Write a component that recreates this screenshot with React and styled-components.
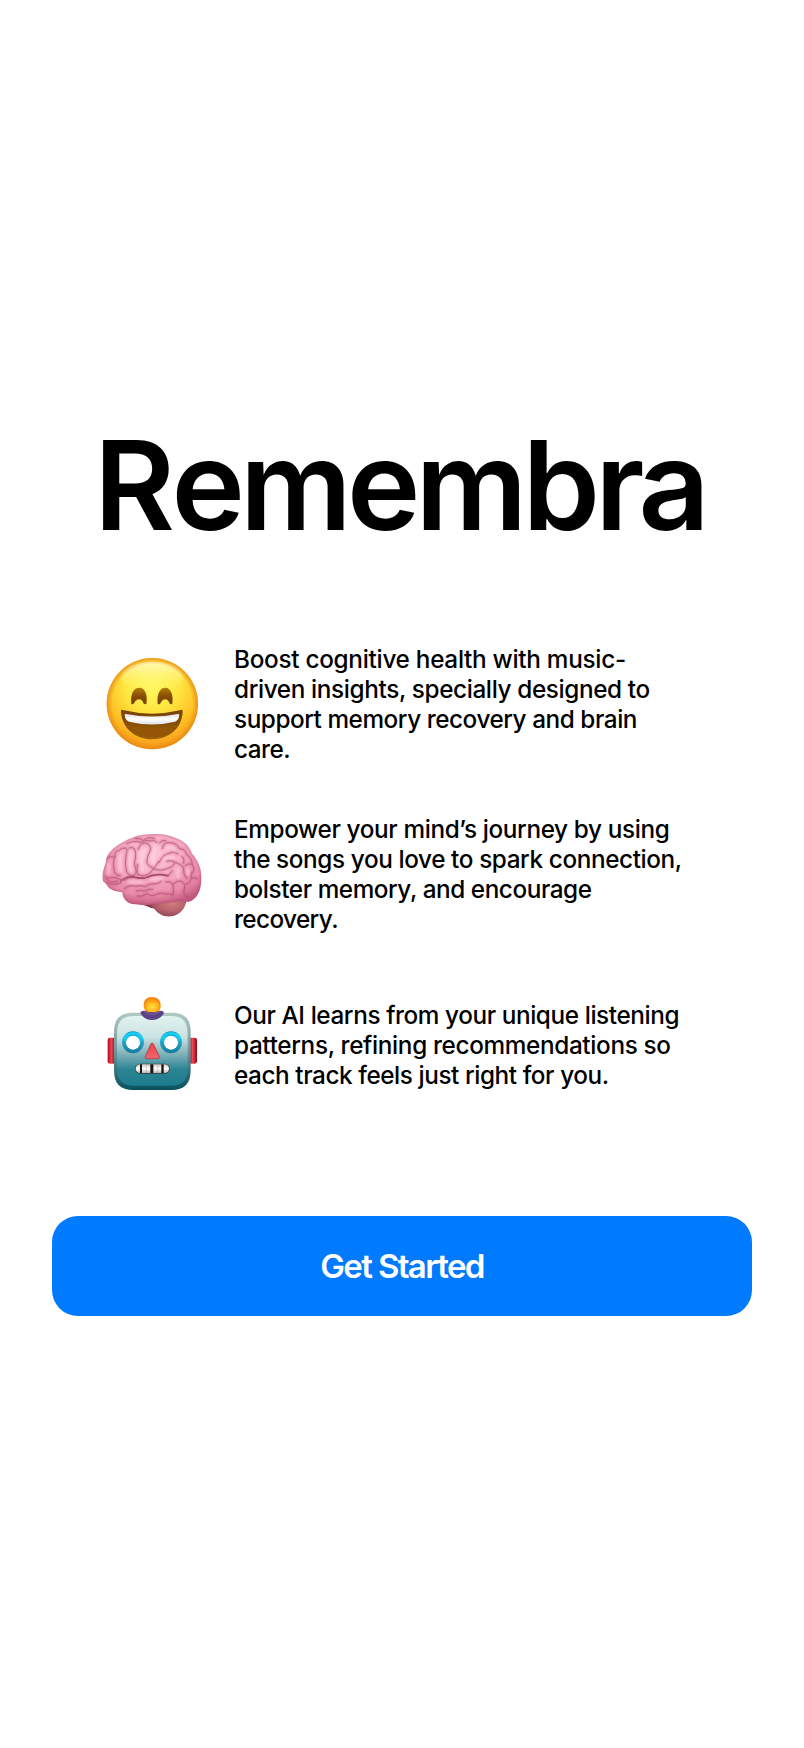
import React from "react";
import styled, { createGlobalStyle } from "styled-components";

const GlobalStyle = createGlobalStyle`
  * { box-sizing: border-box; }
  body { margin: 0; background: #fff; }
`;

const Screen = styled.main`
  min-height: 1748px;
  padding: 410px 52px 0;
  display: flex;
  flex-direction: column;
  background: #fff;
  color: #000;
  font-family: Inter, "Liberation Sans", sans-serif;
`;

const Title = styled.h1`
  margin: 0 0 82px;
  padding-left: 42px;
  font-size: 124.2px;
  line-height: 150px;
  font-weight: 590;
  letter-spacing: -4.85px;
  white-space: nowrap;
`;

const Initial = styled.span`
  letter-spacing: -3.6px;
`;

const FeatureList = styled.ul`
  list-style: none;
  margin: 0 0 110px;
  padding: 0 0 0 38px;
  display: flex;
  flex-direction: column;
  gap: 46px;
`;

const FeatureRow = styled.li`
  display: flex;
  align-items: center;
  gap: 20px;
  height: 124px;
`;

const Emoji = styled.svg`
  flex: none;
  width: 124px;
  height: 124px;
`;

const FeatureText = styled.p`
  margin: 0;
  padding-top: ${(p) => p.$drop || 0}px;
  font-size: 24.3px;
  line-height: 30px;
  font-weight: 450;
`;

const Line = styled.span`
  display: block;
  white-space: nowrap;
  letter-spacing: ${(p) => p.$tracking}px;
`;

const PrimaryButton = styled.button`
  height: 100px;
  padding: 0;
  border: 0;
  border-radius: 26px;
  background: #007aff;
  color: #fff;
  font-family: inherit;
  font-size: 33px;
  font-weight: 580;
  letter-spacing: -1.65px;
`;

function SmileEmoji() {
  return (
    <Emoji viewBox="0 6 372 372" aria-label="Grinning face">
      <defs>
        <radialGradient id="face" cx="0.5" cy="0.28" r="0.74">
          <stop offset="0" stopColor="#fffb62" />
          <stop offset="0.4" stopColor="#ffe640" />
          <stop offset="0.7" stopColor="#fdc326" />
          <stop offset="0.9" stopColor="#f9a01c" />
          <stop offset="1" stopColor="#ef8814" />
        </radialGradient>
        <radialGradient id="rim" cx="0.5" cy="0.5" r="0.5">
          <stop offset="0.87" stopColor="#ee9312" stopOpacity="0" />
          <stop offset="1" stopColor="#e98a16" stopOpacity="0.85" />
        </radialGradient>
        <linearGradient id="shine" x1="0" y1="0" x2="0" y2="1">
          <stop offset="0" stopColor="#fffbd0" stopOpacity="0.85" />
          <stop offset="1" stopColor="#fff45c" stopOpacity="0" />
        </linearGradient>
        <linearGradient id="eye" x1="0" y1="0" x2="0" y2="1">
          <stop offset="0" stopColor="#b47c08" />
          <stop offset="0.5" stopColor="#8a4e05" />
          <stop offset="1" stopColor="#754005" />
        </linearGradient>
        <linearGradient id="mouth" x1="0" y1="0" x2="0" y2="1">
          <stop offset="0" stopColor="#764105" />
          <stop offset="1" stopColor="#9a6008" />
        </linearGradient>
        <linearGradient id="smileTeeth" x1="0" y1="0" x2="0" y2="1">
          <stop offset="0" stopColor="#d9d9e2" />
          <stop offset="0.5" stopColor="#fff" />
          <stop offset="1" stopColor="#dcdde8" />
        </linearGradient>
      </defs>
      <circle cx="187" cy="191" r="137" fill="url(#face)" />
      <ellipse cx="187" cy="112" rx="92" ry="47" fill="url(#shine)" />
      <circle cx="187" cy="191" r="137" fill="url(#rim)" />
      <path d="M124 191C121 161 131 143 148 143S174 164 169 191C166 194 162 192 160 189C156 174 139 174 133 189C130 194 126 194 124 191Z" fill="url(#eye)" />
      <path d="M203 191C200 161 210 143 226 143S251 164 247 191C244 194 240 192 238 189C234 174 218 174 212 189C209 194 205 194 203 191Z" fill="url(#eye)" />
      <path d="M93 213C93 208 96 209 101 211Q186 231 270 211C276 208 278 209 278 214C277 264 238 298 186 298S94 262 93 213Z" fill="url(#mouth)" />
      <path d="M104 221Q186 238 268 221Q268 239 255 245Q185 262 117 245Q104 239 104 221Z" fill="url(#smileTeeth)" />
      <path d="M110 254Q186 270 262 254C248 279 219 291 186 291S125 281 110 254Z" fill="#925606" />
    </Emoji>
  );
}

const brainOutline =
  "M38 185C37 164 47 151 49 131C57 106 83 89 109 76C130 66 149 58 179 58C211 55 235 59 257 69C288 80 299 97 307 117C325 137 335 164 334 190C334 219 326 244 307 256C296 263 284 260 276 258L172 270C155 272 146 267 135 268C113 268 98 252 97 232C84 230 73 229 62 222C51 216 51 206 42 201C38 198 38 192 38 185Z";

const brainFolds = [
  "M49 132Q60 121 73 126Q68 147 73 170Q78 183 91 181",
  "M76 127Q70 109 86 107Q96 97 106 99",
  "M105 99Q115 100 109 117Q103 145 110 171Q119 185 133 181",
  "M131 181Q142 178 137 161Q130 144 136 132Q139 116 134 102Q127 94 117 99",
  "M143 148Q138 164 143 178Q154 186 171 180Q184 174 191 161",
  "M191 161Q178 156 170 143Q171 121 182 104Q182 85 163 84Q149 86 145 103",
  "M110 87Q128 75 153 82Q166 74 183 78Q195 73 201 82",
  "M136 70Q152 70 160 76Q176 64 193 70",
  "M191 161Q213 171 232 160Q248 158 254 144",
  "M206 139Q198 152 191 160",
  "M207 143Q218 118 238 115Q249 107 264 117",
  "M217 101Q220 79 240 83Q259 83 269 102Q284 100 289 116",
  "M208 84Q215 74 227 76",
  "M230 139Q243 133 256 142Q272 147 281 158Q278 176 290 191",
  "M280 145Q286 131 275 124",
  "M289 118Q306 128 307 149Q316 159 309 173",
  "M304 147Q292 145 286 151",
  "M247 167Q241 178 232 183Q214 176 198 179Q180 181 164 190Q145 190 131 187Q113 186 103 196",
  "M44 183Q52 194 64 187Q81 187 93 194",
  "M51 202Q69 214 93 203",
  "M48 190Q60 207 82 198",
  "M103 222Q117 207 137 214Q153 208 164 215Q178 205 192 207Q208 206 214 198",
  "M141 243Q158 247 172 236Q185 247 199 238Q214 231 224 237Q236 234 248 240",
  "M139 228Q153 224 165 228Q176 220 188 223",
  "M249 240Q253 221 248 207Q242 197 227 201",
  "M250 207Q265 193 277 200Q289 211 281 228Q283 243 297 250",
  "M289 208Q301 205 304 190Q312 185 322 191",
  "M305 190Q301 178 305 171",
];

function BrainEmoji() {
  return (
    <Emoji viewBox="0 -9 372 372" aria-label="Brain">
      <defs>
        <radialGradient id="brainFill" cx="0.48" cy="0.3" r="0.7">
          <stop offset="0" stopColor="#ffc9dc" />
          <stop offset="0.48" stopColor="#f8adc5" />
          <stop offset="0.8" stopColor="#ea8aa9" />
          <stop offset="1" stopColor="#c45f81" />
        </radialGradient>
        <radialGradient id="stemFill" cx="0.6" cy="0.35" r="0.7">
          <stop offset="0" stopColor="#cf7d7e" />
          <stop offset="0.6" stopColor="#b45f69" />
          <stop offset="1" stopColor="#86404f" />
        </radialGradient>
        <clipPath id="brainClip"><path d={brainOutline} /></clipPath>
        <filter id="foldSoft"><feGaussianBlur stdDeviation="3" /></filter>
        <filter id="lineSoft"><feGaussianBlur stdDeviation="1" /></filter>
      </defs>
      <path d="M153 267L181 253L219 268L199 280Q183 281 175 275Z" fill="#823349" />
      <path d="M180 270C190 242 242 239 290 257C285 280 271 299 246 304C219 307 204 295 196 285Z" fill="url(#stemFill)" />
      <path d={brainOutline} fill="url(#brainFill)" />
      <g clipPath="url(#brainClip)" fill="none" strokeLinecap="round" strokeLinejoin="round">
        <path d={brainOutline} stroke="#ae4068" strokeWidth="7" opacity="0.4" filter="url(#foldSoft)" />
        <g stroke="#c0587c" strokeWidth="8" opacity="0.4" filter="url(#foldSoft)">
          {brainFolds.map((d) => <path key={d} d={d} />)}
        </g>
        <g stroke="#ad5076" strokeWidth="3" opacity="0.7" filter="url(#lineSoft)">
          {brainFolds.map((d) => <path key={d} d={d} />)}
        </g>
        <path d="M93 198Q112 180 137 187Q164 194 188 181Q216 176 234 182" stroke="#8f2f52" strokeWidth="5" opacity="0.6" filter="url(#lineSoft)" />
        <g stroke="#ffd3e2" strokeWidth="9" opacity="0.6" filter="url(#foldSoft)">
          <path d="M57 149Q56 158 56 173M91 121Q88 144 92 168M121 116Q117 142 122 167M159 104Q151 134 158 167M197 96Q184 123 192 146M221 133Q235 122 249 128M230 99Q245 92 255 106M266 165Q262 178 265 187M292 165Q298 169 294 177M117 201Q139 202 156 202M186 193L214 190" />
        </g>
      </g>
    </Emoji>
  );
}

function RobotEmoji() {
  return (
    <Emoji viewBox="0 6 372 372" aria-label="Robot">
      <defs>
        <linearGradient id="head" x1="0" y1="0" x2="0" y2="1">
          <stop offset="0" stopColor="#e0f3ef" />
          <stop offset="0.3" stopColor="#cce2e2" />
          <stop offset="0.52" stopColor="#88b7bf" />
          <stop offset="0.77" stopColor="#2b8393" />
          <stop offset="1" stopColor="#1e7c8c" />
        </linearGradient>
        <linearGradient id="headEdge" x1="0" y1="0" x2="0" y2="1">
          <stop offset="0" stopColor="#b1c9c3" />
          <stop offset="0.45" stopColor="#739ca1" />
          <stop offset="1" stopColor="#07515d" />
        </linearGradient>
        <linearGradient id="ear" x1="0" y1="0" x2="1" y2="0">
          <stop offset="0" stopColor="#aa061d" />
          <stop offset="0.45" stopColor="#ef4751" />
          <stop offset="1" stopColor="#92001a" />
        </linearGradient>
        <radialGradient id="bulb" cx="0.5" cy="0.62" r="0.55">
          <stop offset="0" stopColor="#ffdf43" />
          <stop offset="0.55" stopColor="#ffbb1c" />
          <stop offset="1" stopColor="#f47d0b" />
        </radialGradient>
        <linearGradient id="robotEye" x1="0" y1="0" x2="0" y2="1">
          <stop offset="0" stopColor="#0e90b8" />
          <stop offset="0.3" stopColor="#15c6e8" />
          <stop offset="0.6" stopColor="#2499bd" />
          <stop offset="1" stopColor="#147a9c" />
        </linearGradient>
        <linearGradient id="nose" x1="0" y1="0" x2="0" y2="1">
          <stop offset="0" stopColor="#ee3e45" />
          <stop offset="1" stopColor="#ea6b6e" />
        </linearGradient>
        <linearGradient id="robotTeeth" x1="0" y1="0" x2="0" y2="1">
          <stop offset="0" stopColor="#c9c7c1" />
          <stop offset="0.5" stopColor="#fff" />
          <stop offset="1" stopColor="#bcb7af" />
        </linearGradient>
        <clipPath id="teethClip"><rect x="137" y="253" width="100" height="26" rx="13" /></clipPath>
        <filter id="headSoft"><feGaussianBlur stdDeviation="2" /></filter>
      </defs>
      <rect x="53" y="173" width="24" height="78" rx="7" fill="url(#ear)" />
      <rect x="297" y="173" width="24" height="78" rx="7" fill="url(#ear)" />
      <path d="M72 158C72 117 89 98 131 98H243C285 98 302 117 302 158V270C302 311 285 330 243 330H131C89 330 72 311 72 270Z" fill="url(#headEdge)" />
      <path d="M81 160C81 125 96 108 131 108H243C278 108 293 125 293 160V264C293 300 278 317 243 317H131C96 317 81 300 81 264Z" fill="url(#head)" filter="url(#headSoft)" />
      <path d="M151 98Q153 92 161 92H213Q220 92 222 98C215 113 202 120 186 120S158 113 151 98Z" fill="#5a4387" />
      <path d="M161 94Q186 112 211 94" fill="none" stroke="#775c98" strokeWidth="4" />
      <path d="M161 77C160 61 171 51 186 51S213 61 212 77C212 94 201 97 186 97S162 92 161 77Z" fill="url(#bulb)" />
      <ellipse cx="187" cy="62" rx="16" ry="7" fill="#ff9c12" opacity="0.5" />
      <circle cx="129" cy="187" r="33" fill="url(#robotEye)" />
      <circle cx="243" cy="187" r="33" fill="url(#robotEye)" />
      <circle cx="129" cy="188" r="21" fill="#fff" />
      <circle cx="243" cy="188" r="21" fill="#fff" />
      <path d="M104 174Q112 160 130 160T155 174M218 174Q226 160 244 160T269 174" fill="none" stroke="#19d2f6" strokeWidth="6" strokeLinecap="round" />
      <path d="M183 191Q187 187 190 192L208 230Q210 236 203 236H170Q163 236 166 230Z" fill="url(#nose)" stroke="#bd4148" strokeWidth="3" />
      <rect x="135" y="251" width="104" height="30" rx="15" fill="#35383c" />
      <rect x="137" y="253" width="100" height="26" rx="13" fill="url(#robotTeeth)" />
      <g clipPath="url(#teethClip)" fill="#171414">
        <rect x="150" y="250" width="6" height="31" />
        <rect x="181" y="250" width="9" height="31" />
        <rect x="214" y="250" width="7" height="31" />
        <rect x="168" y="253" width="3" height="26" opacity="0.15" />
        <rect x="202" y="253" width="3" height="26" opacity="0.15" />
      </g>
    </Emoji>
  );
}

const features = [
  {
    Icon: SmileEmoji,
    lines: [
      ["Boost cognitive health with music-", -0.28],
      ["driven insights, specially designed to", -0.37],
      ["support memory recovery and brain", -0.44],
      ["care.", -0.5],
    ],
  },
  {
    Icon: BrainEmoji,
    lines: [
      ["Empower your mind’s journey by using", -0.36],
      ["the songs you love to spark connection,", -0.39],
      ["bolster memory, and encourage", -0.43],
      ["recovery.", -0.6],
    ],
  },
  {
    Icon: RobotEmoji,
    drop: 2,
    lines: [
      ["Our AI learns from your unique listening", -0.4],
      ["patterns, refining recommendations so", -0.34],
      ["each track feels just right for you.", -0.42],
    ],
  },
];

export default function App() {
  return (
    <>
      <GlobalStyle />
      <Screen>
        <Title><Initial>R</Initial>emembra</Title>
        <FeatureList>
          {features.map(({ Icon, lines, drop }) => (
            <FeatureRow key={lines[0][0]}>
              <Icon />
              <FeatureText $drop={drop}>
                {lines.map(([text, tracking]) => (
                  <Line key={text} $tracking={tracking}>{text} </Line>
                ))}
              </FeatureText>
            </FeatureRow>
          ))}
        </FeatureList>
        <PrimaryButton>Get Started</PrimaryButton>
      </Screen>
    </>
  );
}
